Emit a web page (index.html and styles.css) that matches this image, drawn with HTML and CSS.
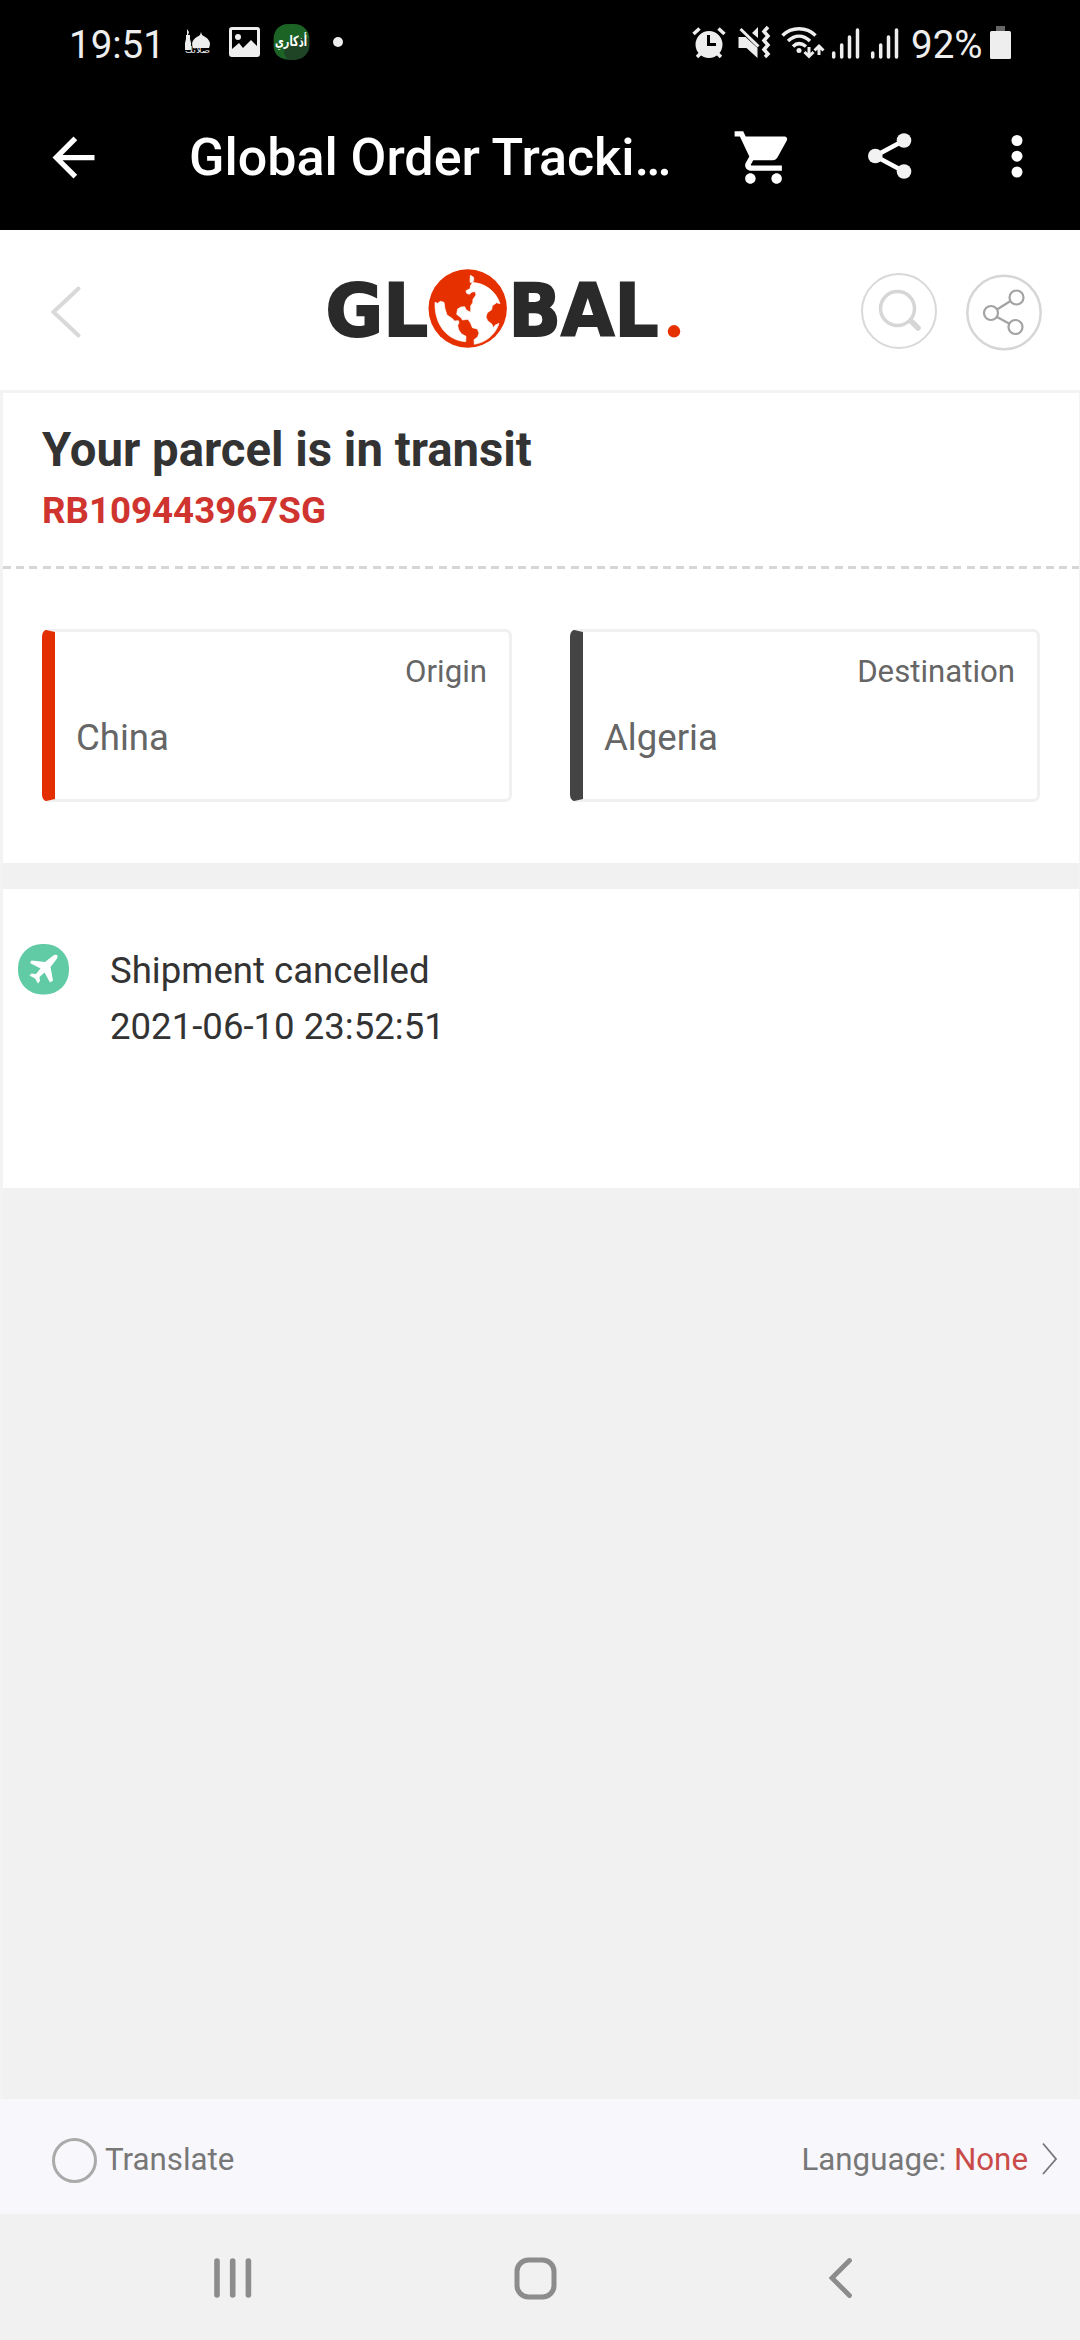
FILE: index.html
```html
<!DOCTYPE html>
<html lang="en">
<head>
<meta charset="utf-8">
<title>Global Order Tracking</title>
<link rel="stylesheet" href="styles.css">
</head>
<body>
<div class="screen">
  <div class="status">
    <span class="time">19:51</span>
    <svg class="notif" width="170" height="84" viewBox="180 0 170 84">
      <g fill="#eee">
        <path d="M186 35h4v4l1 4v7h-6v-7l1-4zM187 29l2 3-1 3h-1zM193 48c-3-7 2-10 7-13l1-3 1 3c6 3 10 7 7 13z"/>
        <text x="185" y="53" font-size="9" textLength="25" lengthAdjust="spacingAndGlyphs" class="arabic">صلاتك</text>
        <path fill-rule="evenodd" d="M232 27h25a3 3 0 0 1 3 3v24a3 3 0 0 1-3 3h-25a3 3 0 0 1-3-3V30a3 3 0 0 1 3-3zm0 3v19l7-6 4 5 8-8 6 6V30zm6 4a3 3 0 1 1 0 6 3 3 0 0 1 0-6z"/>
        <circle cx="338" cy="42" r="5"/>
      </g>
      <rect x="273.500" y="24" width="36" height="36" rx="15" fill="#1e4425"/>
      <path d="M274 36c2-9 7-12 17-12s17 4 18 14c-18-1-25 8-25 15l3 6c-9-1-13-5-13-13z" fill="#1c6425"/>
      <text x="275" y="46" font-size="14" font-weight="700" fill="#fff" textLength="32" lengthAdjust="spacingAndGlyphs" class="arabic">أذكاري</text>
    </svg>
    <svg class="system" width="210" height="84" viewBox="690 0 210 84" fill="#eee" stroke="#eee">
      <g stroke="none">
        <path fill-rule="evenodd" d="M709 31a13.500 13.500 0 1 1 0 27 13.500 13.500 0 0 1 0-27zm-2 4v11h9v-3h-6v-8z"/>
      </g>
      <path d="M693.500 34l6-5.500M724.500 34l-6-5.500M697 57l4-4M721 57l-4-4" stroke-width="3.500"/>
      <path stroke="none" d="M738.500 37h7l12 11v10l-11-10h-8zM752 33l6-6v11z"/>
      <path d="M740.500 29l18 17.500" stroke-width="3"/>
      <path d="M768 27l-4 4.500 4 4.500-4 4.500 4 4.500-4 4.500 4 4.500-3 3" fill="none" stroke-width="3.500"/>
      <g fill="none" stroke-width="3.500">
        <path d="M782.500 35.500c9-9 24-9 33 0M788 41c7-6.500 15-6.500 22 0M793 46.500c4-4 8-4 13 0"/>
        <path d="M809 47v9M804.500 52l4.500 4.500 4.500-4.500M819 55v-9M814.500 50.500l4.500-4.500 4.500 4.500" stroke-width="3"/>
      </g>
      <circle cx="799" cy="50.500" r="2.500" stroke="none"/>
      <path d="M833.700 53v4M841.700 45v12M849.500 37v20M857.500 30v27M872.700 53v4M880.700 45v12M888.500 37v20M896.500 30v27" stroke-width="3.500" stroke-linecap="round"/>
    </svg>
    <span class="percent">92%</span>
    <svg width="22" height="84" viewBox="990 0 22 84"><path d="M996 26h9v5h-9z" fill="#666"/><rect x="990" y="31" width="21" height="28" rx="1.500" fill="#eee"/></svg>
  </div>

  <div class="appbar">
    <svg class="back" width="63" height="63" viewBox="0 0 24 24"><path fill="#fff" d="M20 11H7.830l5.590-5.590L12 4l-8 8 8 8 1.410-1.410L7.830 13H20z"/></svg>
    <h1 class="appbar-title">Global Order Tracki…</h1>
    <svg width="63" height="63" viewBox="0 0 24 24"><path fill="#fff" d="M7 18c-1.100 0-1.990.9-1.990 2S5.900 22 7 22s2-.9 2-2-.9-2-2-2zM1 2v2h2l3.600 7.590-1.350 2.450C4.520 15.370 5.480 17 7 17h12v-2H7.420c-.14 0-.25-.11-.25-.25l.03-.12.9-1.630h7.450c.75 0 1.410-.41 1.750-1.030l3.580-6.490A1 1 0 0 0 20 4H5.210l-.94-2zM17 18c-1.100 0-1.990.9-1.990 2s.89 2 1.990 2 2-.9 2-2-.9-2-2-2z"/></svg>
    <svg class="share" width="44" height="47" viewBox="0 0 44 47"><path d="M36 7.500L7 23l29 15.500" fill="none" stroke="#fff" stroke-width="4.500"/><g fill="#f2f2f2"><circle cx="36" cy="7.500" r="7.300"/><circle cx="7.300" cy="23" r="7.300"/><circle cx="36" cy="38.500" r="7.300"/></g></svg>
    <svg class="more" width="12" height="44" viewBox="0 0 12 44" fill="#fff"><circle cx="6" cy="6.500" r="5.500"/><circle cx="6" cy="22.200" r="5.500"/><circle cx="6" cy="38" r="5.500"/></svg>
  </div>

  <header class="brandbar">
    <svg class="prev" width="32" height="52" viewBox="0 0 32 52"><path d="M28.500 2.500L3.500 26l25 23.500" fill="none" stroke="#d9d9d9" stroke-width="4" stroke-linecap="round"/></svg>
    <svg class="logo" width="360" height="90" viewBox="325 263 360 90">
      <g class="wordmark">
        <text x="325.500" y="335.700" textLength="102.500" lengthAdjust="spacingAndGlyphs">GL</text>
        <text x="508.500" y="335.700" textLength="150" lengthAdjust="spacingAndGlyphs">BAL</text>
      </g>
      <circle cx="467.700" cy="308.500" r="39.200" fill="#e63000"/>
      <g transform="translate(300 240) scale(.33333)" fill="#fff" stroke="#fff" stroke-width="2" stroke-linejoin="round">
        <path d="M405 187l8 3 8-6 11 3 3 19 6 19 15 10 8 8 11-1 2 5-4 10 3 12 8 12 14 8-1 16c-55-4-94-50-92-118z"/>
        <path d="M511 106l10 6v10l-9 14-2 10-12 6 2 8 8 3 8-7 10-1 2 10-9 13-1 10-6 10v19l-13-7-5-10-11 1-10 6-3 16 14 11 3 6 17-2 8 12 5 13 15 4 5 12-4 12-11 8 1 14c35-5 64-30 74-63l-12 6-5 7-4-10-13-11-5-11 4-13 13-9 2-12 13-9 10 3c-12-37-45-64-90-64z"/>
      </g>
      <circle cx="674" cy="331.300" r="6.200" fill="#e63000"/>
    </svg>
    <svg class="tools" width="184" height="80" viewBox="860 272 184 80" fill="none">
      <circle cx="899" cy="311" r="37" stroke="#d9d9d9" stroke-width="2"/>
      <circle cx="897.500" cy="308.500" r="17" stroke="#d6d6d6" stroke-width="3.500"/>
      <path d="M911.500 321.500l6.500 6.500" stroke="#d6d6d6" stroke-width="5.500" stroke-linecap="round"/>
      <circle cx="1004" cy="312.500" r="36.700" stroke="#d6d6d6" stroke-width="2.500"/>
      <g stroke="#a3a3a3" stroke-width="2.200"><circle cx="991" cy="313" r="7"/><circle cx="1016.500" cy="297.500" r="7"/><circle cx="1015.500" cy="327" r="7"/><path d="M997 309.500l13.500-8.500M997 317l12 6.500"/></g>
    </svg>
  </header>

  <main class="content">
    <section class="parcel">
      <div class="summary">
        <h2>Your parcel is in transit</h2>
        <p class="tracking">RB109443967SG</p>
      </div>
      <div class="route">
        <div class="place origin"><span class="role">Origin</span><span class="country">China</span></div>
        <div class="place destination"><span class="role">Destination</span><span class="country">Algeria</span></div>
      </div>
    </section>
    <section class="events">
      <svg class="plane" width="51" height="51" viewBox="0 0 51 51">
        <rect width="51" height="50.500" rx="24" fill="#60cba5"/>
        <path fill="#fff" d="M34 12.500c2-2 5-2 5.500-1 .5 1-.5 3.500-2 5l-5 6.500 2.500 13.500-3 2-5.500-10-5 4.500 .5 4-2 2.500-3-5-5.500-3 2-2 4.500 .5 4.500-5.500-10.500-5.500 1.500-2.500 13.500 1.500z"/>
      </svg>
      <div class="event">
        <p>Shipment cancelled</p>
        <p>2021-06-10 23:52:51</p>
      </div>
    </section>
  </main>

  <footer class="translate">
    <span class="radio"></span>
    <span class="translate-label">Translate</span>
    <span class="language">Language: <b>None</b></span>
    <svg width="16" height="34" viewBox="0 0 16 34"><path d="M1 1.500L14 17 1 32" fill="none" stroke="#777" stroke-width="1.800"/></svg>
  </footer>

  <nav class="navbar">
    <svg width="40" height="42" viewBox="0 0 40 42"><path d="M4 4v34M19.700 4v34M35.400 4v34" stroke="#8c8c8c" stroke-width="5.600" stroke-linecap="round"/></svg>
    <svg class="home" width="43" height="43" viewBox="0 0 43 43"><rect x="3" y="3" width="37" height="37" rx="11.500" fill="none" stroke="#8c8c8c" stroke-width="5"/></svg>
    <svg width="26" height="42" viewBox="0 0 26 42"><path d="M22.500 3.500L5 21l17.500 17.500" fill="none" stroke="#8c8c8c" stroke-width="4.800" stroke-linecap="round"/></svg>
  </nav>
</div>
</body>
</html>
```
FILE: styles.css
```css
* { box-sizing: border-box; margin: 0; padding: 0; }
body { width: 1080px; height: 2340px; overflow: hidden; background: #f1f1f1; font-family: Roboto, "Liberation Sans", sans-serif; }
svg { display: block; flex: none; }
span, p, h1, h2 { white-space: nowrap; }
.screen { display: flex; flex-direction: column; width: 1080px; height: 2340px; }

.status { display: flex; align-items: center; height: 84px; padding-left: 69px; background: #000; color: #eee; font-size: 38.5px; }
.time, .percent { padding-top: 5px; }
.time { width: 111px; }
.notif { margin-right: 340px; }
.percent { width: 79px; margin-left: 11px; }
.arabic { font-family: "DejaVu Sans", sans-serif; }

.appbar { display: flex; align-items: center; height: 146px; padding-left: 42px; background: #000; color: #fff; }
.appbar-title { width: 484px; margin: 1px 59px 0 84px; font-size: 52px; font-weight: 500; }
.share { margin: -2px 0 0 73px; }
.more { margin: -3px 0 0 98.500px; }

.brandbar { display: flex; align-items: center; height: 160px; padding-left: 50px; background: #fff; }
.prev { margin-top: 4px; }
.logo { margin: -4px 175px 0 243px; }
.tools { margin-top: 4px; }
.wordmark { font-family: "DejaVu Sans", sans-serif; font-weight: 700; font-size: 73px; fill: #2a2a2a; stroke: #2a2a2a; stroke-width: 2px; }

.content { flex: 1; display: flex; flex-direction: column; gap: 26px; border: solid #f3f3f3; border-width: 3px 1px 0 3px; }
.parcel { height: 470px; background: #fff; }
.summary { position: relative; height: 176px; padding: 27px 0 0 39px; }
.summary::after { content: ""; position: absolute; left: 0; right: 0; bottom: 0; height: 3px; background: repeating-linear-gradient(90deg, #d6d6d6 0 8px, transparent 8px 13.2px); }
.summary h2 { font-size: 47.3px; line-height: 60px; font-weight: 700; color: #333; }
.tracking { font-size: 36.7px; line-height: 62px; font-weight: 700; color: #d0342f; }
.route { display: flex; gap: 58px; padding: 60px 39px 0; }
.place { display: flex; flex-direction: column; width: 470px; height: 173px; padding: 19px 22px 0 21px; border: 3px solid #f0f0f0; border-left-width: 13px; border-radius: 7px; color: #666; }
.origin { border-left-color: #e32f00; }
.destination { border-left-color: #444; }
.role { align-self: flex-end; font-size: 31.2px; line-height: 42px; }
.country { font-size: 36.6px; line-height: 46px; margin-top: 22px; }
.events { display: flex; height: 299px; padding: 55px 0 0 15px; background: #fff; }
.event { margin: -1px 0 0 41px; font-size: 36.6px; line-height: 56px; color: #333; }

.translate { display: flex; align-items: center; height: 115px; padding: 4px 22px 0 52px; background: #f8f7fc; color: #777; font-size: 31.3px; }
.translate-label, .language { padding-top: 1px; }
.radio { width: 45px; height: 45px; margin: 4px 8px 0 0; border: 3px solid #aaa; border-radius: 50%; }
.language { margin: 0 14px 0 auto; }
.language b { font-weight: 400; color: #c94b49; }

.navbar { display: flex; align-items: center; height: 126px; padding: 2px 0 0 213px; }
.home { margin: 0 270px 0 261px; }
```
